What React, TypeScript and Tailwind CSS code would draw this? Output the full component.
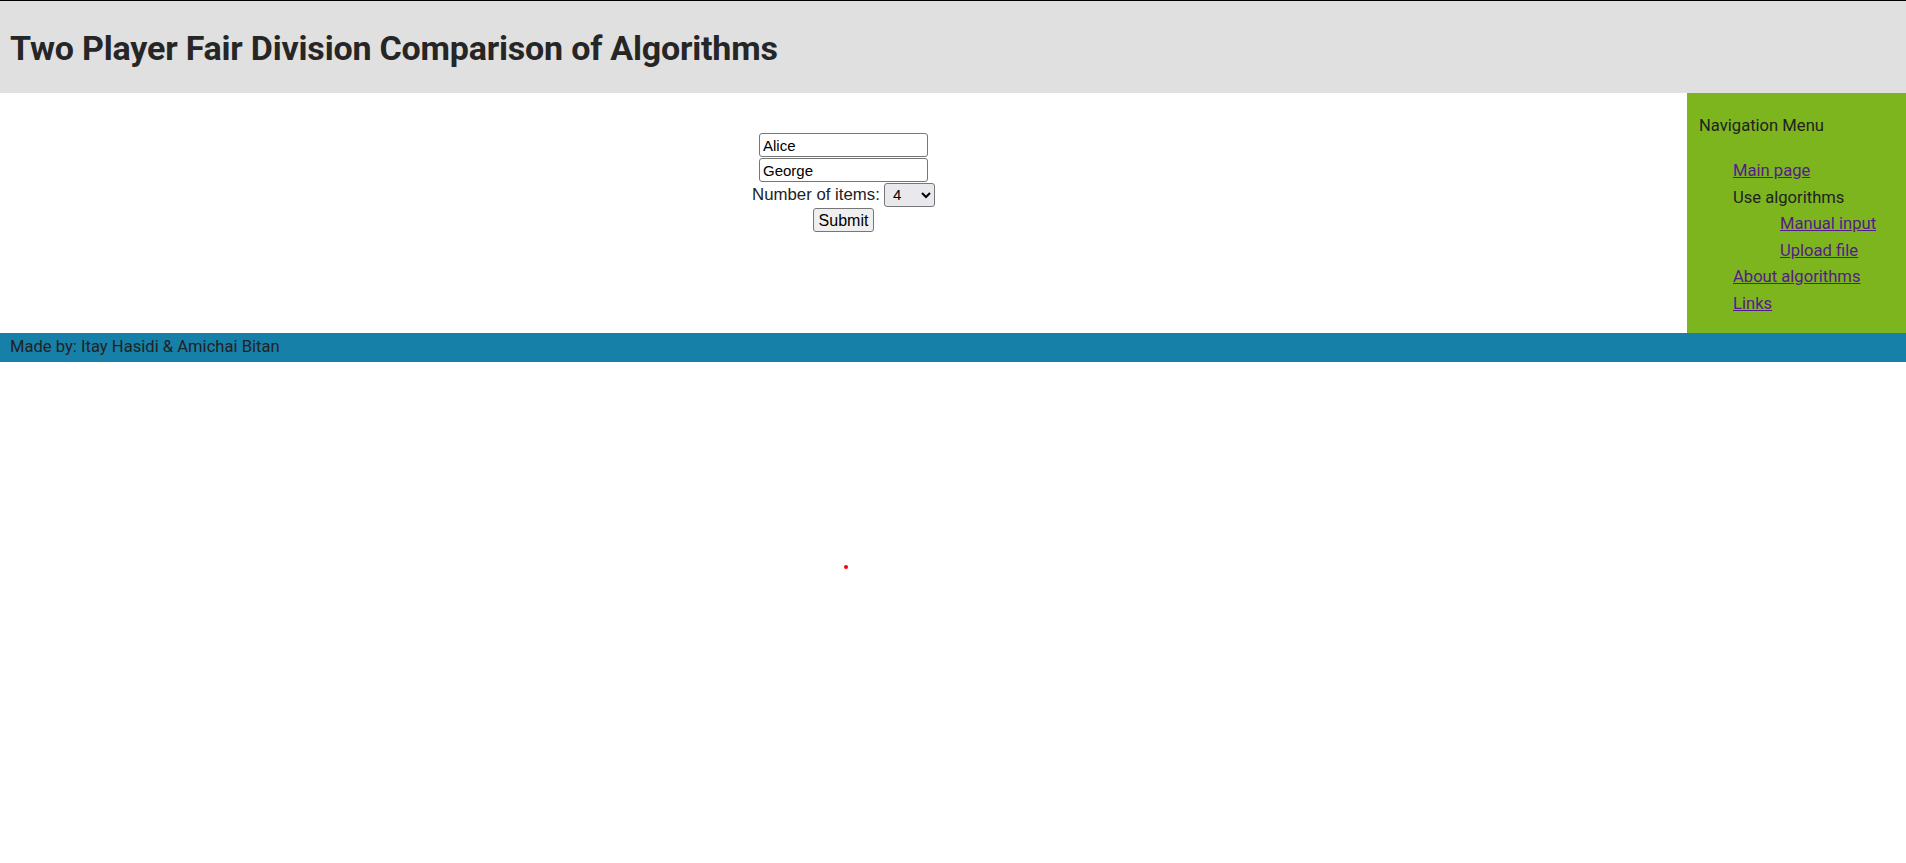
import React, { useState } from 'react';

const links = 'text-[#551a8b] underline';

export default function App() {
  const [p1, setP1] = useState('Alice');
  const [p2, setP2] = useState('George');
  const [count, setCount] = useState('4');

  return (
    <div className="relative min-h-[863px] bg-white font-['Roboto',sans-serif] text-[16.6px] text-[#222]">
      <header className="h-[93px] border-t border-black bg-[#e0e0e0] flex items-center px-[10px]">
        <h1 className="text-[34px] font-bold text-[#262626] tracking-[-0.2px] pt-[2px]">
          Two Player Fair Division Comparison of Algorithms
        </h1>
      </header>

      <div className="flex h-[240px]">
        <main className="flex-1 pt-[40px]">
          <form
            onSubmit={(e) => e.preventDefault()}
            className="flex flex-col items-center font-['Liberation_Sans',Arial,sans-serif] text-black"
          >
            <input
              value={p1}
              onChange={(e) => setP1(e.target.value)}
              className="w-[169px] h-[24px] border border-[#767676] rounded-[3px] px-[3px] text-[15px]"
            />
            <input
              value={p2}
              onChange={(e) => setP2(e.target.value)}
              className="mt-[1px] w-[169px] h-[24px] border border-[#767676] rounded-[3px] px-[3px] text-[15px]"
            />
            <div className="flex items-center h-[25px] gap-[4px]">
              <span className="text-[16.8px] text-[#222]">Number of items:</span>
              <select
                value={count}
                onChange={(e) => setCount(e.target.value)}
                className="w-[51px] h-[24px] border border-[#767676] rounded-[3px] bg-[#e9e9ed] pl-[4px] text-[15px]"
              >
                {['2', '3', '4', '5', '6', '7', '8'].map((n) => (
                  <option key={n} value={n}>{n}</option>
                ))}
              </select>
            </div>
            <button
              type="submit"
              className="mt-[1px] w-[61px] h-[24px] border border-[#767676] rounded-[3px] bg-[#efefef] text-[16px]"
            >
              Submit
            </button>
          </form>
        </main>

        <aside className="w-[219px] bg-[#7cb51d] pl-[12px] pt-[23px] text-[#222]">
          <p className="leading-[20px]">Navigation Menu</p>
          <ul className="mt-[22px] pl-[34px] leading-[26.5px]">
            <li><a href="#" className={links}>Main page</a></li>
            <li>
              Use algorithms
              <ul className="pl-[47px]">
                <li><a href="#" className={links}>Manual input</a></li>
                <li><a href="#" className={links}>Upload file</a></li>
              </ul>
            </li>
            <li><a href="#" className={links}>About algorithms</a></li>
            <li><a href="#" className={links}>Links</a></li>
          </ul>
        </aside>
      </div>

      <footer className="h-[29px] bg-[#1680a9] flex items-center px-[10px] text-[#222]">
        Made by: Itay Hasidi &amp; Amichai Bitan
      </footer>

      <span className="absolute left-[844px] top-[565px] w-[4px] h-[4px] bg-[#ff0000] rounded-full" />
    </div>
  );
}
